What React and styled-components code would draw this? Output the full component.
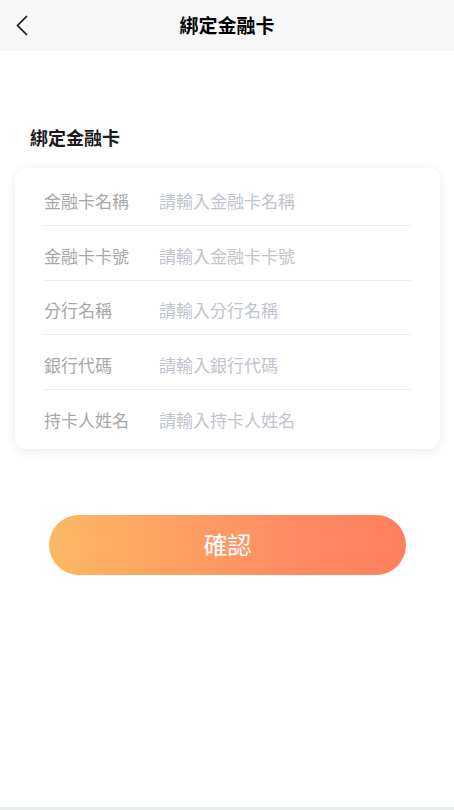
import React from 'react';
import styled, { createGlobalStyle } from 'styled-components';

const GlobalStyle = createGlobalStyle`
  html, body {
    margin: 0;
    padding: 0;
    background: #fff;
    font-family: "Noto Sans CJK TC", "Noto Sans", sans-serif;
  }
`;

const Page = styled.div`
  width: 454px;
  height: 810px;
  display: flex;
  flex-direction: column;
  background: #fff;
  overflow: hidden;
`;

const Header = styled.div`
  height: 51px;
  flex-shrink: 0;
  background: #f7f7f7;
  display: grid;
  grid-template-columns: 60px 1fr 60px;
  align-items: center;
`;

const BackButton = styled.button`
  border: none;
  background: none;
  padding: 0 0 0 15px;
  height: 51px;
  display: flex;
  align-items: center;
  justify-content: flex-start;
  cursor: pointer;
`;

const HeaderTitle = styled.div`
  text-align: center;
  font-size: 19px;
  font-weight: 700;
  color: #000;
  margin-top: -2px;
`;

const Content = styled.div`
  flex: 1;
  display: flex;
  flex-direction: column;
  padding: 0 14px 0 15px;
`;

const SectionTitle = styled.div`
  margin: 73px 0 0 15px;
  font-size: 18px;
  font-weight: 700;
  color: #1a1a1a;
  line-height: 26px;
`;

const Card = styled.div`
  margin-top: 18px;
  background: #fff;
  border-radius: 12px;
  box-shadow: 0 2px 12px rgba(0, 0, 0, 0.08);
  padding: 3.4px 29px 5.5px 29px;
`;

const Row = styled.div`
  display: flex;
  align-items: center;
  height: 48.6px;
  padding-top: 5px;
  border-bottom: ${p => (p.last ? 'none' : '1px solid #ebedf0')};
`;

const Label = styled.div`
  width: 115px;
  flex-shrink: 0;
  font-size: 17px;
  color: #a7a7a7;
`;

const Input = styled.input`
  flex: 1;
  border: none;
  outline: none;
  background: transparent;
  font-family: inherit;
  font-size: 17px;
  padding: 0;
  color: #333;
  &::placeholder {
    color: #c0c4cc;
  }
`;

const ConfirmButton = styled.button`
  margin: 66px 34px 0 34px;
  height: 60px;
  padding: 0 0 2px 0;
  border: none;
  border-radius: 30px;
  background: linear-gradient(90deg, #fdb863 0%, #ff8a62 70%, #ff805e 100%);
  color: #fff;
  font-family: inherit;
  font-size: 24px;
  cursor: pointer;
`;

const BottomBar = styled.div`
  height: 3px;
  flex-shrink: 0;
  background: #e6ebf2;
`;

const fields = [
  { label: '金融卡名稱', placeholder: '請輸入金融卡名稱' },
  { label: '金融卡卡號', placeholder: '請輸入金融卡卡號' },
  { label: '分行名稱', placeholder: '請輸入分行名稱' },
  { label: '銀行代碼', placeholder: '請輸入銀行代碼' },
  { label: '持卡人姓名', placeholder: '請輸入持卡人姓名' },
];

const App = () => {
  return (
    <>
      <GlobalStyle />
      <Page>
        <Header>
          <BackButton>
            <svg width="14" height="24" viewBox="0 0 14 24" fill="none">
              <path d="M12 2 L2.5 11.5 L12 21" stroke="#111" strokeWidth="1.6" />
            </svg>
          </BackButton>
          <HeaderTitle>綁定金融卡</HeaderTitle>
          <div />
        </Header>
        <Content>
          <SectionTitle>綁定金融卡</SectionTitle>
          <Card>
            {fields.map((f, i) => (
              <Row key={f.label} last={i === fields.length - 1}>
                <Label>{f.label}</Label>
                <Input placeholder={f.placeholder} />
              </Row>
            ))}
          </Card>
          <ConfirmButton>確認</ConfirmButton>
        </Content>
        <BottomBar />
      </Page>
    </>
  );
};

export default App;
